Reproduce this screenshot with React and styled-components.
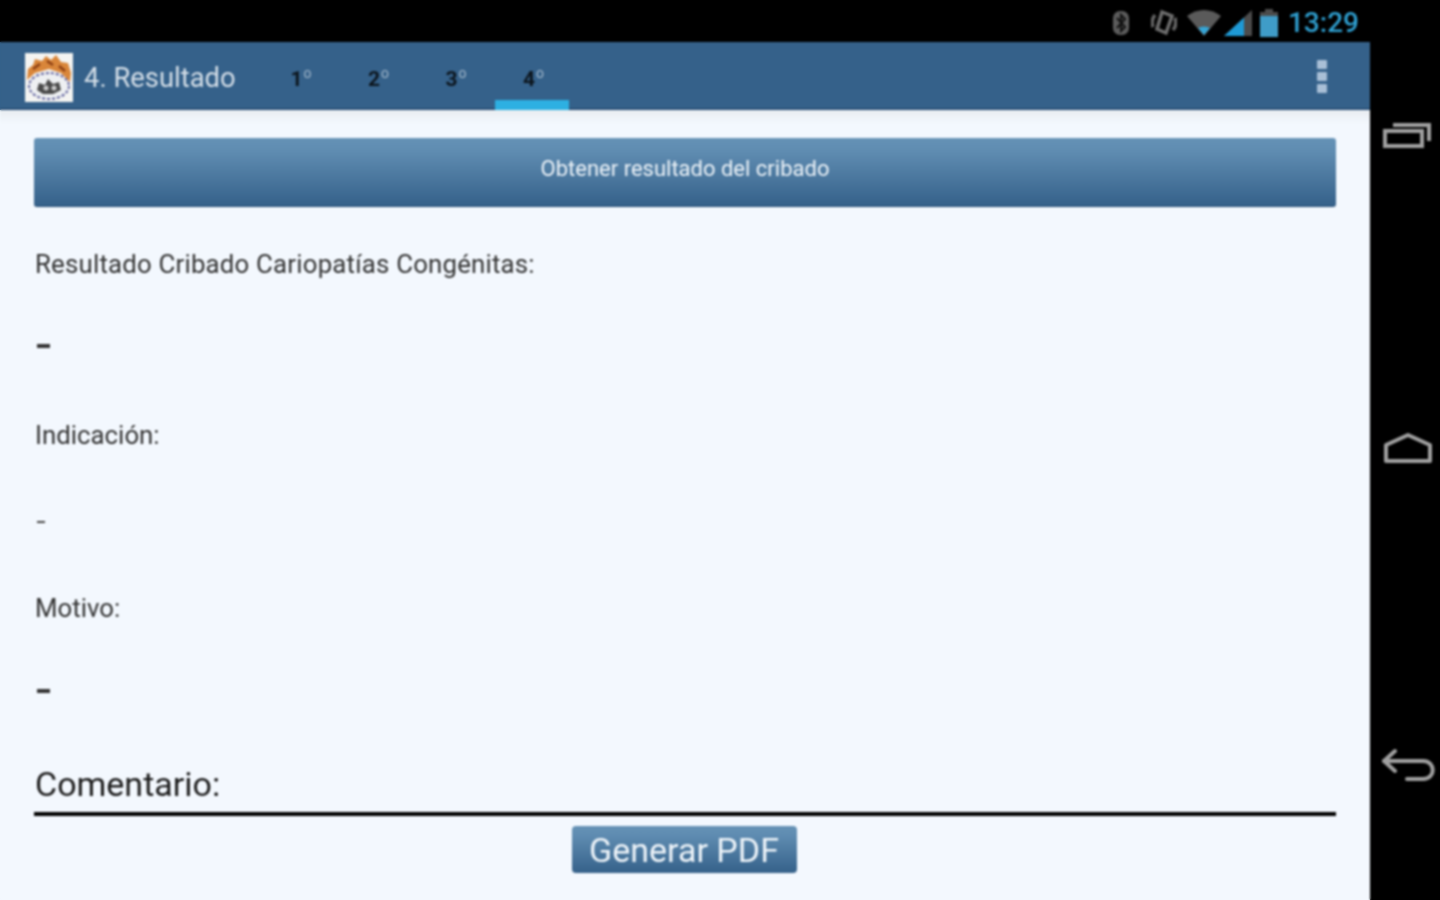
import React from "react";
import styled, { createGlobalStyle } from "styled-components";

const GlobalStyle = createGlobalStyle`
  html, body {
    margin: 0;
    padding: 0;
    height: 100%;
    overflow: hidden;
  }
  body {
    font-family: Roboto, "Liberation Sans", sans-serif;
    /* same bands as the page, so the blur doesn't darken the window edges */
    background:
      linear-gradient(to right, transparent 1370px, #000 1370px),
      linear-gradient(to bottom, #000 42px, #35618a 42px, #35618a 110px, #f3f8fe 110px);
  }
`;

const Screen = styled.div`
  display: flex;
  width: 1440px;
  height: 900px;
  background: #000;
  filter: blur(0.85px);
`;

const Main = styled.div`
  display: flex;
  flex-direction: column;
  width: 1370px;
  height: 900px;
`;

const StatusBar = styled.div`
  display: flex;
  justify-content: flex-end;
  align-items: center;
  height: 42px;
  padding: 3px 11px 0 0;
  box-sizing: border-box;
  background: #000;
`;

const StatusIcon = styled.svg`
  display: block;
  margin-right: ${(p) => p.$gap || 0}px;
`;

const Clock = styled.span`
  font-size: 28px;
  line-height: 34px;
  font-weight: 500;
  color: #2f9fd0;
  margin-left: 10px;
`;

const ActionBar = styled.div`
  display: flex;
  align-items: center;
  height: 68px;
  padding: 4px 43px 0 25px;
  box-sizing: border-box;
  background: #35618a;
  border-bottom: 2px solid #2a5178;
`;

const Title = styled.span`
  font-size: 27.4px;
  color: #d5dfe8;
  margin-left: 11px;
  padding-top: 2px;
  width: 178.5px;
  white-space: nowrap;
`;

const Tabs = styled.div`
  display: flex;
  gap: 3.5px;
  align-self: stretch;
  flex: 1;
  margin-top: -4px;
`;

const Tab = styled.div`
  display: flex;
  justify-content: center;
  width: 74px;
  box-sizing: border-box;
  padding: 24px 0 0 3px;
  font-size: 21px;
  line-height: 26px;
  font-weight: 700;
  color: #0c151d;
  height: 68px;
  border-bottom: 10px solid ${(p) => (p.$active ? "#2db0e2" : "transparent")};

  sup {
    font-size: 14px;
    font-weight: 400;
    line-height: 14px;
    margin-left: 1px;
    color: #a3b8cb;
  }
`;

const Overflow = styled.div`
  display: flex;
  flex-direction: column;
  gap: 3px;
  margin-top: -2px;
`;

const Dot = styled.span`
  width: 10px;
  height: 9px;
  border-radius: 1px;
  background: #a9bfd6;
`;

const Content = styled.div`
  flex: 1;
  display: flex;
  flex-direction: column;
  padding: 28px 34px 0 34px;
  background: linear-gradient(#e9edf1 0, #f3f8fe 14px);
`;

const WideButton = styled.div`
  display: flex;
  justify-content: center;
  align-items: center;
  height: 69px;
  flex-shrink: 0;
  padding-bottom: 7px;
  border-radius: 3px;
  background: linear-gradient(#6592b6 0, #5f8cb1 20%, #35618a 100%);
  border-bottom: 1px solid #2a5178;
  box-sizing: border-box;
  font-size: 22px;
  color: #eef4f9;
`;

const Label = styled.div`
  font-size: 25.8px;
  line-height: 30px;
  letter-spacing: ${(p) => p.$spacing || 0}px;
  color: #333;
  margin-top: ${(p) => p.$top}px;
  padding-left: 1px;
`;

const Dash = styled.div`
  width: ${(p) => (p.$bold ? 13 : 8)}px;
  height: ${(p) => (p.$bold ? 4 : 2)}px;
  background: ${(p) => (p.$bold ? "#333" : "#444")};
  margin: ${(p) => p.$top}px 0 0 3px;
`;

const Heading = styled.div`
  font-size: 34px;
  line-height: 40px;
  color: #1c1c1c;
  margin-top: 71px;
  padding-left: 1px;
`;

const Rule = styled.div`
  height: 4px;
  background: #000;
  margin-top: 8px;
`;

const PdfRow = styled.div`
  display: flex;
  justify-content: center;
  margin-top: 10px;
`;

const PdfButton = styled.div`
  display: flex;
  justify-content: center;
  align-items: center;
  width: 225px;
  height: 47px;
  margin-right: 2px;
  border-radius: 4px;
  background: linear-gradient(#6592b6 0, #5f8cb1 20%, #35618a 100%);
  font-size: 34px;
  color: #eef4f9;
`;

const NavRail = styled.div`
  display: flex;
  flex-direction: column;
  justify-content: space-between;
  align-items: center;
  width: 70px;
  height: 900px;
  box-sizing: border-box;
  padding: 120px 0 116px 5px;
  background: #000;
`;

const NavIcon = styled.svg`
  display: block;
  fill: none;
  stroke: #a0a0a0;
  stroke-width: 4;
`;

function Logo() {
  return (
    <svg width="48" height="49" viewBox="0 0 48 49">
      <rect width="48" height="49" fill="#f4f4f2" />
      <path d="M2 27 L3 16 L8 12 L10 6 L17 8 L21 3 L26 7 L31 2 L36 9 L43 10 L46 20 L45 29 L36 20 L24 16 L10 20 Z" fill="#d9863a" />
      <path d="M8 16 L15 11 M22 8 L28 12 M34 13 L40 18" stroke="#8c3f14" strokeWidth="2.5" />
      <ellipse cx="24" cy="33" rx="20" ry="13" fill="#eef0f2" stroke="#5d5f9c" strokeWidth="2" strokeDasharray="3 2" />
      <path d="M12 37 L14 30 L20 32 L23 26 L28 31 L34 29 L36 37 L28 41 L18 41 Z" fill="#4a4a4a" />
      <circle cx="21" cy="35" r="2.5" fill="#ccc" />
      <circle cx="29" cy="35" r="2.5" fill="#ccc" />
    </svg>
  );
}

function StatusIcons() {
  return (
    <>
      <StatusIcon width="18" height="26" viewBox="0 0 18 26" $gap={21}>
        <rect x="1" y="1" width="16" height="24" rx="7" fill="#5c5c5c" />
        <path d="M5 8 L13 17 L9 21 V5 L13 9 L5 18" fill="none" stroke="#111" strokeWidth="2" />
      </StatusIcon>
      <StatusIcon width="26" height="30" viewBox="0 0 26 30" $gap={10}>
        <path d="M11 4 L21 8 L15 25 L6 21 Z" fill="none" stroke="#6e6e6e" strokeWidth="3.5" />
        <path d="M4 7 A12 12 0 0 0 2 19 M22 22 A12 12 0 0 0 24 10" fill="none" stroke="#666" strokeWidth="3.5" />
      </StatusIcon>
      <StatusIcon width="34" height="26" viewBox="0 0 34 26" $gap={3}>
        <path d="M0 6 C10 -2 24 -2 34 6 L17 26 Z" fill="#5a5a5a" />
        <path d="M11 18 C15 16 19 16 23 18 L17 25 Z" fill="#35a5d6" />
      </StatusIcon>
      <StatusIcon width="28" height="26" viewBox="0 0 28 26" $gap={8}>
        <path d="M0 26 L28 0 V26 Z" fill="#4c4c4c" />
        <path d="M0 26 L20 7.5 V26 Z" fill="#1e9ad6" />
      </StatusIcon>
      <StatusIcon width="18" height="28" viewBox="0 0 18 28">
        <path d="M5 0 H13 V3 H18 V28 H0 V3 H5 Z" fill="#4c4c4c" />
        <rect y="7" width="18" height="21" fill="#3f9cc8" />
      </StatusIcon>
    </>
  );
}

export default function App() {
  return (
    <>
      <GlobalStyle />
      <Screen>
        <Main>
          <StatusBar>
            <StatusIcons />
            <Clock>13:29</Clock>
          </StatusBar>
          <ActionBar>
            <Logo />
            <Title>4. Resultado</Title>
            <Tabs>
              <Tab>1<sup>o</sup></Tab>
              <Tab>2<sup>o</sup></Tab>
              <Tab>3<sup>o</sup></Tab>
              <Tab $active>4<sup>o</sup></Tab>
            </Tabs>
            <Overflow>
              <Dot />
              <Dot />
              <Dot />
            </Overflow>
          </ActionBar>
          <Content>
            <WideButton>Obtener resultado del cribado</WideButton>
            <Label $top={42} $spacing={0.2}>Resultado Cribado Cariopatías Congénitas:</Label>
            <Dash $bold $top={65} />
            <Label $top={72}>Indicación:</Label>
            <Dash $top={71} />
            <Label $top={70}>Motivo:</Label>
            <Dash $bold $top={66} />
            <Heading>Comentario:</Heading>
            <Rule />
            <PdfRow>
              <PdfButton>Generar PDF</PdfButton>
            </PdfRow>
          </Content>
        </Main>
        <NavRail>
          <NavIcon width="50" height="30" viewBox="0 0 50 30">
            <rect x="2" y="11" width="37" height="15" />
            <path d="M10 5 H46 V21" />
          </NavIcon>
          <NavIcon width="52" height="32" viewBox="0 0 52 32">
            <path d="M4 28 V12 L26 2 L48 12 V28 Z" strokeLinejoin="round" />
          </NavIcon>
          <NavIcon width="54" height="36" viewBox="0 0 54 36">
            <path d="M14 3 L3 13 L14 23" strokeLinecap="round" strokeLinejoin="round" />
            <path d="M3 13 H42 C55 13 55 31 42 31 H26" strokeLinecap="round" />
          </NavIcon>
        </NavRail>
      </Screen>
    </>
  );
}
